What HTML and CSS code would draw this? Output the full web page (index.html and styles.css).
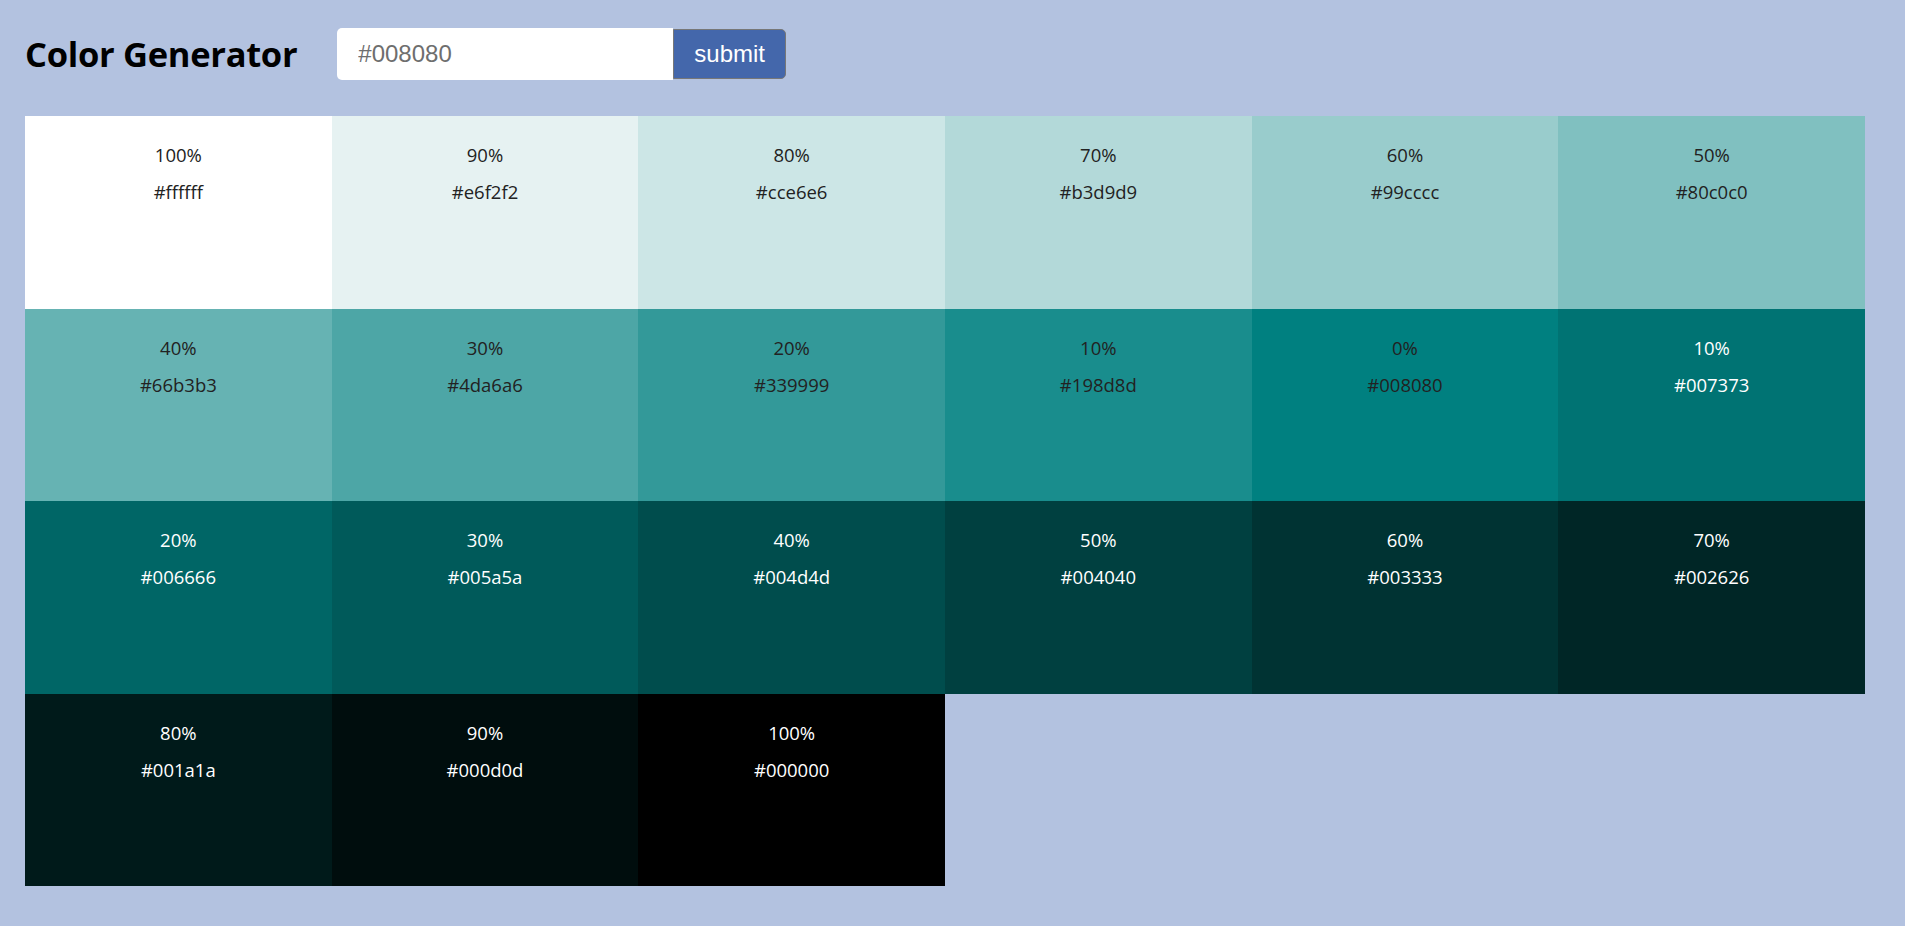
FILE: index.html
```html
<!DOCTYPE html>
<html lang="en">
<head>
<meta charset="utf-8">
<title>Color Generator</title>
<link rel="stylesheet" href="styles.css">
</head>
<body>
<section class="header">
  <h3 class="title">Color Generator</h3>
  <form class="form">
    <input class="color-input" type="text" placeholder="#008080">
    <button class="btn" type="button">submit</button>
  </form>
</section>
<section class="colors">
  <article class="color" style="background-color:#ffffff"><p class="pct">100%</p><p class="hex">#ffffff</p></article>
  <article class="color" style="background-color:#e6f2f2"><p class="pct">90%</p><p class="hex">#e6f2f2</p></article>
  <article class="color" style="background-color:#cce6e6"><p class="pct">80%</p><p class="hex">#cce6e6</p></article>
  <article class="color" style="background-color:#b3d9d9"><p class="pct">70%</p><p class="hex">#b3d9d9</p></article>
  <article class="color" style="background-color:#99cccc"><p class="pct">60%</p><p class="hex">#99cccc</p></article>
  <article class="color" style="background-color:#80c0c0"><p class="pct">50%</p><p class="hex">#80c0c0</p></article>
  <article class="color" style="background-color:#66b3b3"><p class="pct">40%</p><p class="hex">#66b3b3</p></article>
  <article class="color" style="background-color:#4da6a6"><p class="pct">30%</p><p class="hex">#4da6a6</p></article>
  <article class="color" style="background-color:#339999"><p class="pct">20%</p><p class="hex">#339999</p></article>
  <article class="color" style="background-color:#198d8d"><p class="pct">10%</p><p class="hex">#198d8d</p></article>
  <article class="color" style="background-color:#008080"><p class="pct">0%</p><p class="hex">#008080</p></article>
  <article class="color dark" style="background-color:#007373"><p class="pct">10%</p><p class="hex">#007373</p></article>
  <article class="color dark" style="background-color:#006666"><p class="pct">20%</p><p class="hex">#006666</p></article>
  <article class="color dark" style="background-color:#005a5a"><p class="pct">30%</p><p class="hex">#005a5a</p></article>
  <article class="color dark" style="background-color:#004d4d"><p class="pct">40%</p><p class="hex">#004d4d</p></article>
  <article class="color dark" style="background-color:#004040"><p class="pct">50%</p><p class="hex">#004040</p></article>
  <article class="color dark" style="background-color:#003333"><p class="pct">60%</p><p class="hex">#003333</p></article>
  <article class="color dark" style="background-color:#002626"><p class="pct">70%</p><p class="hex">#002626</p></article>
  <article class="color dark" style="background-color:#001a1a"><p class="pct">80%</p><p class="hex">#001a1a</p></article>
  <article class="color dark" style="background-color:#000d0d"><p class="pct">90%</p><p class="hex">#000d0d</p></article>
  <article class="color dark" style="background-color:#000000"><p class="pct">100%</p><p class="hex">#000000</p></article>
</section>
</body>
</html>
```

FILE: styles.css
```css
* {
  box-sizing: border-box;
}

body {
  margin: 0;
  padding: 28px 40px 0 25px;
  background: #b3c2e0;
  font-family: "Open Sans", "Noto Sans", sans-serif;
  color: #222;
}

.header {
  display: flex;
  align-items: center;
  gap: 40px;
  height: 52px;
}

.title {
  margin: 0;
  font-size: 34.5px;
  font-weight: 700;
  letter-spacing: -0.3px;
  color: #000;
  line-height: 1;
}

.form {
  display: flex;
  align-items: center;
}

.color-input {
  width: 336px;
  height: 52px;
  border: none;
  border-radius: 5px 0 0 5px;
  padding: 0 21px;
  font-family: "Liberation Sans", Arial, sans-serif;
  font-size: 24px;
  color: #555;
  background: #fff;
  outline: none;
}

.color-input::placeholder {
  color: #6e6e6e;
}

.btn {
  height: 50px;
  padding: 0 20px;
  border: 1px solid #777;
  border-radius: 0 5px 5px 0;
  background: #4467ab;
  color: #fff;
  font-family: "Liberation Sans", Arial, sans-serif;
  font-size: 24px;
  cursor: pointer;
}

.colors {
  margin-top: 36px;
  display: grid;
  grid-template-columns: repeat(6, 1fr);
  grid-auto-rows: 192.5px;
}

.color {
  display: flex;
  flex-direction: column;
  align-items: center;
  gap: 9px;
  padding-top: 25px;
  font-size: 18.5px;
  line-height: 28px;
  color: #222;
}

.color p {
  margin: 0;
}

.color.dark {
  color: #fff;
}
```
